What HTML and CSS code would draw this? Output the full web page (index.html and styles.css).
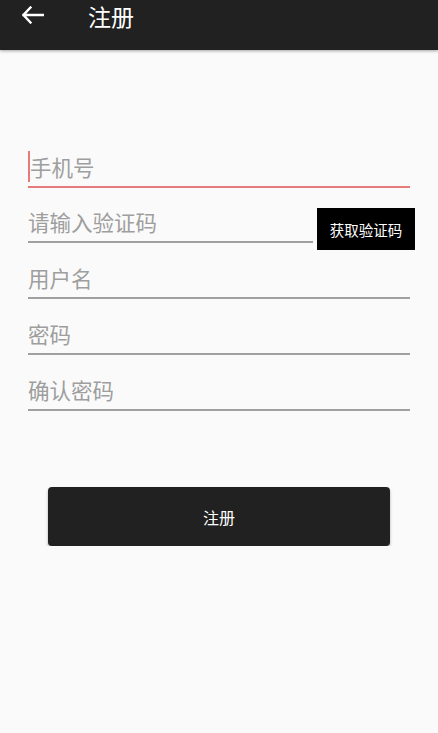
FILE: index.html
```html
<!DOCTYPE html>
<html lang="zh">
<head>
<meta charset="utf-8">
<title>注册</title>
<link rel="stylesheet" href="styles.css">
</head>
<body>
<header class="appbar">
  <svg class="back" width="22" height="18" viewBox="0 0 22 18">
    <path d="M8.5 1.5 L1.5 9 L8.5 16.5 M1.5 9 H21" fill="none" stroke="#fff" stroke-width="2.4" stroke-linecap="square" stroke-linejoin="miter"/>
  </svg>
  <h1 class="title">注册</h1>
</header>
<main class="form">
  <div class="field focused"><span class="caret"></span><span class="ph">手机号</span></div>
  <div class="code-row">
    <div class="field code"><span class="ph">请输入验证码</span></div>
    <button class="get-code">获取验证码</button>
  </div>
  <div class="field"><span class="ph">用户名</span></div>
  <div class="field"><span class="ph">密码</span></div>
  <div class="field"><span class="ph">确认密码</span></div>
  <button class="submit">注册</button>
</main>
</body>
</html>
```
FILE: styles.css
```css
html, body {
  margin: 0;
  padding: 0;
  background: #fafafa;
  font-family: "Noto Sans CJK SC", "Noto Sans", sans-serif;
}
.appbar {
  height: 50px;
  background: #212121;
  display: flex;
  align-items: flex-start;
  box-shadow: 0 1px 3px rgba(0,0,0,0.35);
}
.back {
  margin: 6px 0 0 22px;
  display: block;
}
.title {
  margin: 0 0 0 44px;
  font-size: 23px;
  font-weight: normal;
  color: #fff;
  line-height: 33px;
}
.form {
  padding: 82px 28px 0;
  display: flex;
  flex-direction: column;
}
.field {
  height: 54px;
  border-bottom: 2px solid #a0a0a0;
  display: flex;
  align-items: flex-end;
  position: relative;
}
.field.focused {
  border-bottom-color: #e57b7b;
}
.ph {
  font-size: 21.5px;
  line-height: 24px;
  color: #9e9e9e;
  margin-bottom: 7px;
}
.focused .ph {
  margin-left: 2px;
}
.caret {
  position: absolute;
  left: 0;
  bottom: 4px;
  width: 2px;
  height: 31px;
  background: #e57b7b;
}
.code-row {
  display: flex;
  align-items: flex-end;
  margin-right: -5px;
}
.code-row .field {
  flex: 1;
  height: 53px;
}
.get-code {
  margin: 0 0 -7px 4px;
  width: 98px;
  height: 42px;
  border: none;
  background: #000;
  color: #fff;
  font-family: inherit;
  font-size: 14.5px;
  padding: 0;
}
.submit {
  margin: 76px 20px 0;
  height: 59px;
  border: none;
  border-radius: 4px;
  background: #212121;
  color: #fff;
  font-family: inherit;
  font-size: 16px;
  box-shadow: 0 2px 3px rgba(0,0,0,0.3);
}
```
